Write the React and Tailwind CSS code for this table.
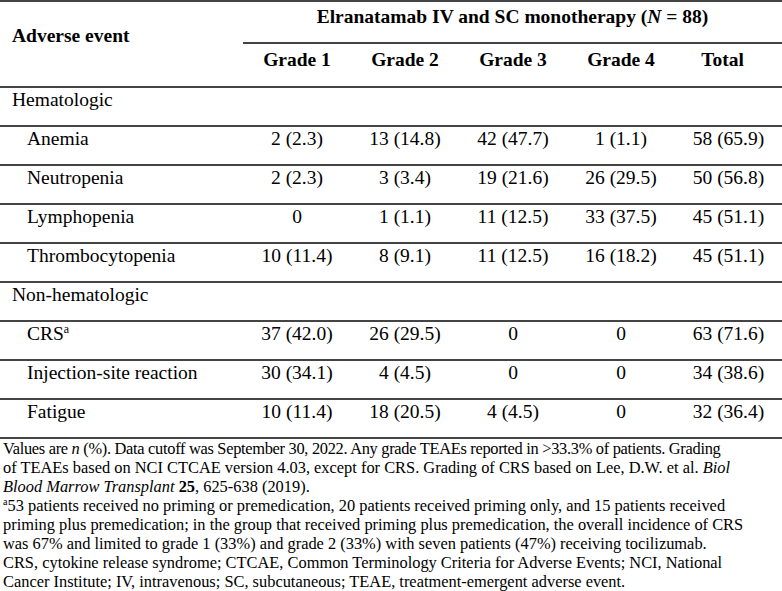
import React from "react";

const rows = [
  { type: "cat", label: "Hematologic" },
  { label: "Anemia", v: ["2 (2.3)", "13 (14.8)", "42 (47.7)", "1 (1.1)", "58 (65.9)"] },
  { label: "Neutropenia", v: ["2 (2.3)", "3 (3.4)", "19 (21.6)", "26 (29.5)", "50 (56.8)"] },
  { label: "Lymphopenia", v: ["0", "1 (1.1)", "11 (12.5)", "33 (37.5)", "45 (51.1)"] },
  { label: "Thrombocytopenia", v: ["10 (11.4)", "8 (9.1)", "11 (12.5)", "16 (18.2)", "45 (51.1)"] },
  { type: "cat", label: "Non-hematologic" },
  { label: "CRS", sup: "a", v: ["37 (42.0)", "26 (29.5)", "0", "0", "63 (71.6)"] },
  { label: "Injection-site reaction", v: ["30 (34.1)", "4 (4.5)", "0", "0", "34 (38.6)"] },
  { label: "Fatigue", v: ["10 (11.4)", "18 (20.5)", "4 (4.5)", "0", "32 (36.4)"] },
];

export default function App() {
  return (
    <div
      className="w-[782px] h-[591px] bg-white text-black overflow-hidden"
      style={{ fontFamily: '"Liberation Serif", "Times New Roman", serif' }}
    >
      {/* Header */}
      <div className="grid grid-cols-[243px_539px] border-t-2 border-b-2 border-[#444] text-[19.5px] leading-[22px] font-bold">
        <div className="row-span-2 pl-3 pt-[23px]">Adverse event</div>
        <div className="h-[42px] border-b-2 border-[#444] pt-[4px] text-center">
          Elranatamab IV and SC monotherapy (<i>N</i> = 88)
        </div>
        <div className="h-[42px] grid grid-cols-[108px_108px_108px_108px_107px] pt-[5px] text-center">
          <div>Grade 1</div>
          <div>Grade 2</div>
          <div>Grade 3</div>
          <div>Grade 4</div>
          <div className="pr-3">Total</div>
        </div>
      </div>

      {/* Body */}
      {rows.map((r, i) => (
        <div
          key={i}
          className="h-[39px] grid grid-cols-[243px_108px_108px_108px_108px_107px] border-b-2 border-[#444] text-[19.5px] leading-[22px] pt-[1px]"
        >
          {r.type === "cat" ? (
            <div className="pl-3 col-span-6">{r.label}</div>
          ) : (
            <>
              <div className="pl-[27px]">
                {r.label}
                {r.sup && <sup className="text-[12px] -top-[7px]">{r.sup}</sup>}
              </div>
              {r.v.map((x, j) => (
                <div key={j} className="text-center">
                  {x}
                </div>
              ))}
            </>
          )}
        </div>
      ))}

      {/* Footnotes */}
      <div className="pl-[3px] text-[16.4px] leading-[19px] whitespace-nowrap">
        <div className="tracking-[-0.3px]">
          Values are <i>n</i> (%). Data cutoff was September 30, 2022. Any grade TEAEs reported in &gt;33.3% of patients. Grading
        </div>
        <div>
          of TEAEs based on NCI CTCAE version 4.03, except for CRS. Grading of CRS based on Lee, D.W. et al. <i>Biol</i>
        </div>
        <div>
          <i>Blood Marrow Transplant</i> <b>25</b>, 625-638 (2019).
        </div>
        <div>
          <sup className="text-[10px] -top-[6px]">a</sup>53 patients received no priming or premedication, 20 patients received priming only, and 15 patients received
        </div>
        <div>
          priming plus premedication; in the group that received priming plus premedication, the overall incidence of CRS
        </div>
        <div>
          was 67% and limited to grade 1 (33%) and grade 2 (33%) with seven patients (47%) receiving tocilizumab.
        </div>
        <div>
          CRS, cytokine release syndrome; CTCAE, Common Terminology Criteria for Adverse Events; NCI, National
        </div>
        <div>
          Cancer Institute; IV, intravenous; SC, subcutaneous; TEAE, treatment-emergent adverse event.
        </div>
      </div>
    </div>
  );
}
